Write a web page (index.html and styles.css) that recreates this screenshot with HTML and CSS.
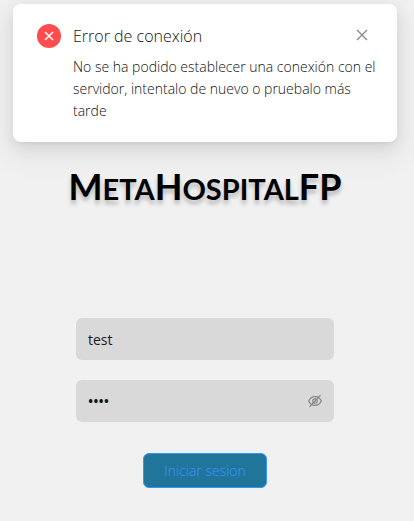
FILE: index.html
```html
<!DOCTYPE html>
<html lang="es">
<head>
<meta charset="utf-8">
<meta name="viewport" content="width=device-width, initial-scale=1">
<title>MetaHospitalFP</title>
<link rel="stylesheet" href="styles.css">
</head>
<body>
<div class="notice" role="alert">
  <svg class="notice-icon" viewBox="0 0 24 24" aria-hidden="true">
    <circle cx="12" cy="12" r="12" fill="#ff4d4f"/>
    <path d="M8 8l8 8M16 8l-8 8" stroke="#fff" stroke-width="1.5" fill="none"/>
  </svg>
  <div class="notice-body">
    <div class="notice-head">
      <h2 class="notice-title">Error de conexión</h2>
      <button class="notice-close" type="button" aria-label="Cerrar">
        <svg viewBox="0 0 16 16" aria-hidden="true"><path d="M3 3l10 10M13 3L3 13" stroke="#8c8c8c" stroke-width="1.4" fill="none"/></svg>
      </button>
    </div>
    <p class="notice-text">No se ha podido establecer una conexión con el servidor, intentalo de nuevo o pruebalo más tarde</p>
  </div>
</div>
<main class="login">
  <h1 class="brand">M<span class="small">eta</span>H<span class="small">ospital</span>FP</h1>
  <form class="form">
    <input class="field" type="text" aria-label="Usuario" value="test">
    <div class="field password">
      <input class="password-input" type="password" aria-label="Contraseña" value="test">
      <button class="eye" type="button" aria-label="Mostrar contraseña">
        <svg viewBox="0 0 14 14" fill="none" stroke="#858585" stroke-width="1.2" aria-hidden="true">
          <path d="M.7 7C3.2 1.2 10.800 1.200 13.300 7C10.800 12.800 3.200 12.800 .7 7z"/>
          <circle cx="7" cy="7" r="2.200"/>
          <path d="M1.500 12.800L12.500 1.200"/>
        </svg>
      </button>
    </div>
    <button class="submit" type="button">Iniciar sesion</button>
  </form>
</main>
</body>
</html>
```
FILE: styles.css
```css
* {
  box-sizing: border-box;
}

body {
  margin: 0;
  background: #f1f1f1;
  font-family: "Open Sans", "Noto Sans", sans-serif;
  font-size: 14px;
  font-weight: 300;
  line-height: 22px;
  color: #111;
}

button,
input {
  font: inherit;
}

.notice {
  position: relative;
  display: flex;
  gap: 12px;
  max-width: 384px;
  margin: 4px auto 0;
  left: -2px;
  padding: 20px 24px;
  background: #fff;
  border-radius: 8px;
  box-shadow: 0 6px 16px rgba(0, 0, 0, 0.08), 0 3px 6px -4px rgba(0, 0, 0, 0.12), 0 9px 28px 8px rgba(0, 0, 0, 0.05);
}

.notice-icon {
  flex: none;
  width: 24px;
  height: 24px;
}

.notice-body {
  flex: 1;
}

.notice-head {
  display: flex;
  justify-content: space-between;
  margin-bottom: 8px;
}

.notice-title {
  margin: 0;
  font-size: 16px;
  font-weight: 300;
  line-height: 24px;
}

.notice-close {
  width: 22px;
  height: 22px;
  padding: 3px;
  border: 0;
  background: none;
}

.notice-close svg,
.eye svg {
  display: block;
  width: 100%;
}

.notice-text {
  margin: 0 -12px 0 0;
}

.login {
  display: flex;
  flex-direction: column;
  align-items: center;
  padding: 20px 4px 32px 0;
}

.brand {
  margin: 0;
  font-family: Lato, sans-serif;
  font-size: 36px;
  font-weight: 700;
  line-height: 48px;
  color: #000;
  text-shadow: 0 4px 4px rgba(0, 0, 0, 0.25);
}

.small {
  font-size: 29px;
  text-transform: uppercase;
}

.form {
  display: flex;
  flex-direction: column;
  align-items: center;
  gap: 20px;
  width: 258px;
  margin-top: 105px;
}

.field {
  width: 100%;
  height: 42px;
  padding: 0 12px;
  border: 0;
  border-radius: 6px;
  background: #d9d9d9;
  color: #1a1a1a;
  font-weight: 400;
}

.password {
  display: flex;
  align-items: center;
}

.password-input {
  flex: 1;
  min-width: 0;
  padding: 0;
  border: 0;
  background: none;
  color: #111;
  font-weight: 600;
}

.eye {
  width: 14px;
  height: 14px;
  padding: 0;
  border: 0;
  background: none;
}

.submit {
  height: 35px;
  margin-top: 11px;
  padding: 0 20px;
  border: 1px solid #3396ff;
  border-radius: 6px;
  background: #21759b;
  color: #3396ff;
  font-weight: 300;
}
```
